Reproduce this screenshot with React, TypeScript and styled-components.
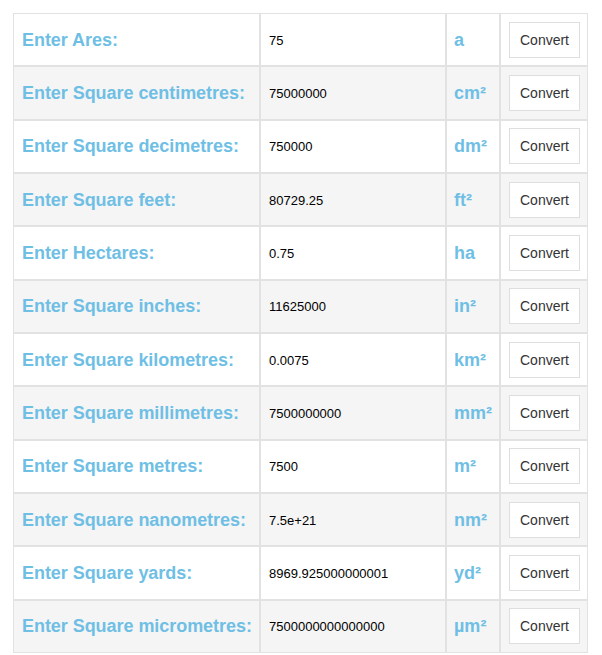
import React from "react";
import styled, { createGlobalStyle } from "styled-components";

const Global = createGlobalStyle`
  html, body { margin: 0; padding: 0; background: #ffffff; }
  body { font-family: "Liberation Sans", Arial, sans-serif; }
`;

const Page = styled.div`
  padding: 13px 14px 0 13px;
`;

const Grid = styled.div`
  display: grid;
  grid-template-columns: 247px 186px 54px 88px;
  grid-auto-rows: 53.333px;
  width: 575px;
`;

const Cell = styled.div<{ $alt: boolean }>`
  box-sizing: border-box;
  border: 1px solid #e2e2e2;
  background: ${(p) => (p.$alt ? "#f5f5f5" : "#ffffff")};
  display: flex;
  align-items: center;
  padding: 1px 7px 0 8px;
  min-width: 0;
`;

const Label = styled.span`
  font-weight: bold;
  font-size: 18px;
  color: #6fbfe5;
  white-space: nowrap;
  letter-spacing: -0.05px;
`;

const Input = styled.input`
  border: none;
  outline: none;
  background: transparent;
  font-family: "Liberation Sans", Arial, sans-serif;
  font-size: 13px;
  color: #000;
  padding: 0;
  width: 100%;
`;

const Unit = styled.span`
  font-weight: bold;
  font-size: 18px;
  color: #6fbfe5;
  margin-left: -1px;
`;

const Button = styled.button`
  box-sizing: border-box;
  width: 72px;
  height: 36px;
  margin-top: -1px;
  background: #ffffff;
  border: 1px solid #dedede;
  font-family: "Liberation Sans", Arial, sans-serif;
  font-size: 14px;
  color: #333;
  padding: 0;
  cursor: pointer;
`;

const rows: [string, string, string][] = [
  ["Ares", "75", "a"],
  ["Square centimetres", "75000000", "cm²"],
  ["Square decimetres", "750000", "dm²"],
  ["Square feet", "80729.25", "ft²"],
  ["Hectares", "0.75", "ha"],
  ["Square inches", "11625000", "in²"],
  ["Square kilometres", "0.0075", "km²"],
  ["Square millimetres", "7500000000", "mm²"],
  ["Square metres", "7500", "m²"],
  ["Square nanometres", "7.5e+21", "nm²"],
  ["Square yards", "8969.925000000001", "yd²"],
  ["Square micrometres", "7500000000000000", "µm²"],
];

export default function App() {
  return (
    <Page>
      <Global />
      <Grid>
        {rows.map(([name, value, unit], i) => {
          const alt = i % 2 === 1;
          return (
            <React.Fragment key={name}>
              <Cell $alt={alt}>
                <Label>Enter {name}:</Label>
              </Cell>
              <Cell $alt={alt}>
                <Input defaultValue={value} />
              </Cell>
              <Cell $alt={alt}>
                <Unit>{unit}</Unit>
              </Cell>
              <Cell $alt={alt}>
                <Button>Convert</Button>
              </Cell>
            </React.Fragment>
          );
        })}
      </Grid>
    </Page>
  );
}
